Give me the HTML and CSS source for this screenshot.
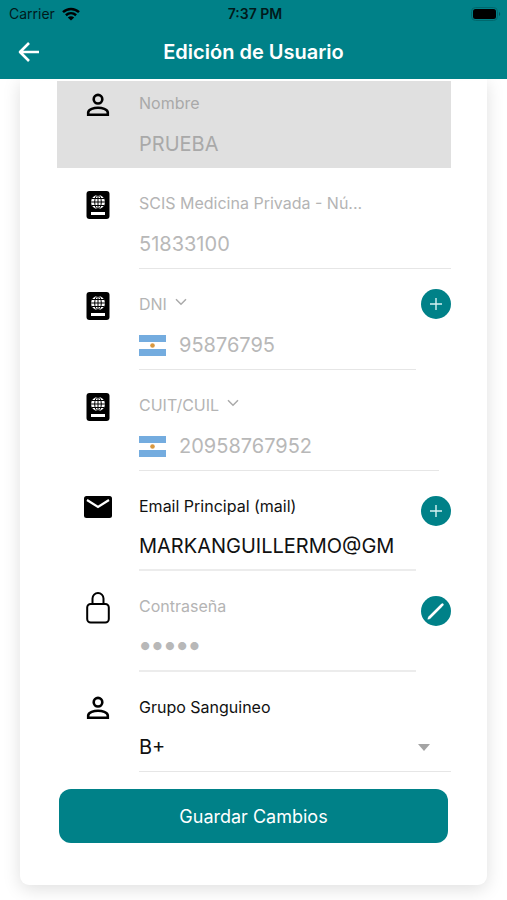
FILE: index.html
```html
<!DOCTYPE html>
<html lang="es">
<head>
<meta charset="utf-8">
<meta name="viewport" content="width=device-width, initial-scale=1">
<title>Edición de Usuario</title>
<link rel="stylesheet" href="styles.css">
</head>
<body>
<svg width="0" height="0" class="sprite" aria-hidden="true">
  <symbol id="person" viewBox="0 0 24 24">
    <circle cx="12" cy="6.2" r="4.3" fill="none" stroke="#000" stroke-width="2.6"/>
    <path d="M2.2 21.8v-2.2c0-3.4 6-4.9 9.8-4.9s9.8 1.500 9.800 4.900v2.200z" fill="none" stroke="#000" stroke-width="2.600"/>
  </symbol>
  <symbol id="passport" viewBox="0 0 24 28">
    <rect x="0.500" y="0" width="23" height="28" rx="3"/>
    <circle cx="12" cy="11" r="7" fill="#fff"/>
    <g fill="none" stroke="#000" stroke-width="1">
      <ellipse cx="12" cy="11" rx="3.300" ry="7"/>
      <path d="M12 4v14M5 11h14M6 7.500h12M6 14.500h12"/>
    </g>
    <path d="M5 21h14v3H5z" fill="#fff"/>
  </symbol>
  <symbol id="flag" viewBox="0 0 27 21">
    <path d="M0 0h27v21H0z" fill="#fff"/>
    <path d="M0 0h27v7H0zM0 14h27v7H0z" fill="#74acdf"/>
    <circle cx="13.500" cy="10.500" r="2.300" fill="#d9983f"/>
  </symbol>
  <symbol id="chevron" viewBox="0 0 12 8">
    <path d="M1 1.200l5 5 5-5" fill="none" stroke="#aaa" stroke-width="1.500"/>
  </symbol>
  <symbol id="plus" viewBox="0 0 30 30">
    <path d="M15 9v12M9 15h12" fill="none" stroke="#d5f2f2" stroke-width="1.400"/>
  </symbol>
</svg>

<header class="topbar">
  <div class="status">
    <div class="carrier">Carrier
      <svg width="18" height="14" viewBox="0 0 18 14" aria-hidden="true">
        <g fill="none" stroke="#000" stroke-width="2.500">
          <path d="M1 5.200c4.600-4.300 11.400-4.300 16 0"/>
          <path d="M3.900 8.300c3-2.700 7.200-2.700 10.200 0"/>
        </g>
        <path d="M9 13.500L5.800 10.400c1.900-1.600 4.500-1.600 6.400 0z"/>
      </svg>
    </div>
    <div class="time">7:37 PM</div>
    <div class="battery">
      <svg width="30" height="14" viewBox="0 0 30 14" aria-hidden="true">
        <rect x="0.500" y="0.500" width="26" height="13" rx="4" fill="none" stroke="#00686d"/>
        <rect x="2" y="2" width="23" height="10" rx="2.500"/>
        <path d="M28 5c1.600.6 1.600 3.400 0 4z" fill="#00565a"/>
      </svg>
    </div>
  </div>
  <nav class="nav">
    <button class="back" type="button" aria-label="Volver">
      <svg width="22" height="20" viewBox="0 0 22 20" aria-hidden="true">
        <path d="M21 10H2M11 1L2 10l9 9" fill="none" stroke="#fff" stroke-width="2.600" stroke-linejoin="round"/>
      </svg>
    </button>
    <h1 class="title">Edición de Usuario</h1>
  </nav>
</header>

<main class="card">
  <form>
    <div class="row row-filled">
      <svg class="icon icon-person" aria-hidden="true"><use href="#person"/></svg>
      <div class="field">
        <label for="nombre">Nombre</label>
        <input id="nombre" type="text" value="PRUEBA" disabled>
      </div>
    </div>

    <div class="row">
      <svg class="icon" aria-hidden="true"><use href="#passport"/></svg>
      <div class="field">
        <label for="scis">SCIS Medicina Privada - Nú...</label>
        <input id="scis" type="text" value="51833100" disabled>
      </div>
    </div>

    <div class="row">
      <svg class="icon" aria-hidden="true"><use href="#passport"/></svg>
      <div class="field">
        <label for="dni">DNI <svg class="chevron" aria-hidden="true"><use href="#chevron"/></svg></label>
        <div class="value">
          <svg class="flag" aria-hidden="true"><use href="#flag"/></svg>
          <input id="dni" type="text" value="95876795" disabled>
        </div>
      </div>
      <button class="round" type="button" aria-label="Agregar documento"><svg aria-hidden="true"><use href="#plus"/></svg></button>
    </div>

    <div class="row row-inset">
      <svg class="icon" aria-hidden="true"><use href="#passport"/></svg>
      <div class="field">
        <label for="cuit">CUIT/CUIL <svg class="chevron" aria-hidden="true"><use href="#chevron"/></svg></label>
        <div class="value">
          <svg class="flag" aria-hidden="true"><use href="#flag"/></svg>
          <input id="cuit" type="text" value="20958767952" disabled>
        </div>
      </div>
    </div>

    <div class="row row-editable">
      <svg class="icon icon-mail" viewBox="0 0 28 22" aria-hidden="true">
        <rect width="28" height="22" rx="2.500"/>
        <path d="M3 4l11 7 11-7" fill="none" stroke="#fff" stroke-width="2.200"/>
      </svg>
      <div class="field field-strong">
        <label for="mail">Email Principal (mail)</label>
        <input id="mail" type="text" value="MARKANGUILLERMO@GM">
      </div>
      <button class="round round-low" type="button" aria-label="Agregar email"><svg aria-hidden="true"><use href="#plus"/></svg></button>
    </div>

    <div class="row">
      <svg class="icon icon-lock" viewBox="0 0 24 32" aria-hidden="true">
        <g fill="none" stroke="#000" stroke-width="2">
          <rect x="1.200" y="12" width="21.600" height="18.500" rx="3.500"/>
          <path d="M6.500 12V6.500a5.500 5.500 0 0 1 11 0V12"/>
        </g>
      </svg>
      <div class="field field-strong">
        <label for="clave">Contraseña</label>
        <input id="clave" type="password" value="12345" disabled>
      </div>
      <button class="round round-low" type="button" aria-label="Editar contraseña">
        <svg viewBox="0 0 30 30" aria-hidden="true">
          <path d="M8 22L20.500 9.500" fill="none" stroke="#fff" stroke-width="2.600"/>
          <path d="M6.500 23.500l.6-2.800 2.200 2.200z" fill="#fff"/>
          <path d="M20.800 9.200l.6-.6" stroke="#fff" stroke-width="2.600" stroke-linecap="round"/>
        </svg>
      </button>
    </div>

    <div class="row row-editable">
      <svg class="icon icon-person" aria-hidden="true"><use href="#person"/></svg>
      <div class="field">
        <label for="grupo">Grupo Sanguineo</label>
        <div class="value">
          <select id="grupo"><option>B+</option></select>
          <svg class="caret" width="12" height="7" viewBox="0 0 12 7" aria-hidden="true"><path d="M0 0h12L6 7z" fill="#a4a4a4"/></svg>
        </div>
      </div>
    </div>

    <button class="save" type="submit">Guardar Cambios</button>
  </form>
</main>
</body>
</html>
```

FILE: styles.css
```css
* {
  box-sizing: border-box;
}

body {
  margin: 0;
  background: #fff;
  color: #111;
  font-family: Inter, "Liberation Sans", sans-serif;
  overflow-x: hidden;
}

button {
  border: 0;
  padding: 0;
  font-family: inherit;
}

.sprite {
  position: absolute;
}

.topbar {
  position: relative;
  background: #008188;
  height: 79px;
}

.status {
  display: grid;
  grid-template-columns: 1fr auto 1fr;
  align-items: center;
  height: 27px;
  padding: 0 6px 0 9px;
  font-size: 14px;
  color: #001a1b;
}

.carrier {
  display: flex;
  align-items: center;
  gap: 7px;
}

.time {
  font-weight: 600;
}

.battery {
  display: flex;
  justify-content: flex-end;
}

.nav {
  display: grid;
  grid-template-columns: 40px 1fr 40px;
  align-items: center;
  height: 50px;
}

.back {
  display: flex;
  justify-content: flex-end;
  background: none;
}

.title {
  margin: 0;
  color: #fff;
  font-size: 20px;
  font-weight: 600;
  text-align: center;
}

.card {
  margin: 0 20px 15px;
  padding: 2px 36px 42px 37px;
  border-radius: 0 0 9px 9px;
  background: #fff;
  box-shadow: 0 4px 18px rgba(0, 0, 0, 0.13);
}

.row {
  display: flex;
  align-items: flex-start;
  height: 101px;
}

.row-editable {
  height: 100px;
}

.row-inset {
  padding-right: 12px;
}

.icon {
  flex: none;
  width: 24px;
  height: 28px;
  margin: 23px 29px 0;
}

.icon-person {
  height: 24px;
  margin-top: 24px;
}

.icon-mail {
  width: 28px;
  height: 22px;
  margin: 25px 27px 0;
}

.icon-lock {
  height: 32px;
  margin-top: 21px;
}

.field {
  flex: 1;
  min-width: 0;
  height: 100%;
  padding-top: 23px;
  border-bottom: 1px solid #e6e6e6;
}

.field-strong {
  border-bottom: 2px solid #ececec;
}

.row-filled {
  height: 87px;
  background: #e0e0e0;
}

.row-filled .field {
  padding-top: 10px;
  border-bottom: 0;
}

.row-filled .icon {
  margin-top: 12px;
}

label {
  display: flex;
  align-items: center;
  gap: 8px;
  height: 24px;
  color: #b4b4b4;
  font-size: 16px;
  white-space: nowrap;
}

.row-editable label {
  color: #111;
}

.chevron {
  width: 12px;
  height: 8px;
  margin-bottom: 5px;
}

.value {
  display: flex;
  align-items: center;
}

.flag {
  flex: none;
  width: 27px;
  height: 21px;
  margin-right: 13px;
}

input,
select {
  display: block;
  width: 100%;
  min-width: 0;
  height: 32px;
  margin: 0;
  padding: 0;
  border: 0;
  outline: 0;
  background: none;
  color: #111;
  font-family: inherit;
  font-size: 20px;
  appearance: none;
  opacity: 1;
}

label + input,
.value {
  margin-top: 13px;
}

.row-editable label + input,
.row-editable .value {
  margin-top: 12px;
}

label + input {
  padding-right: 20px;
}

input:disabled {
  color: #b8b8b8;
}

label + input[type="password"] {
  margin-top: 10px;
  font-size: 26px;
  font-weight: 700;
}

.row-filled label,
.row-filled input:disabled {
  color: #a9a9a9;
}

.caret {
  flex: none;
  margin-right: 21px;
}

.round {
  flex: none;
  width: 30px;
  height: 30px;
  margin: 20px 0 0 5px;
  border-radius: 50%;
  background: #008188;
}

.round-low {
  margin-top: 25px;
}

.round svg {
  display: block;
  width: 30px;
  height: 30px;
}

.save {
  display: block;
  width: calc(100% - 5px);
  height: 54px;
  margin: 17px 0 0 2px;
  border-radius: 12px;
  background: #008188;
  color: #fff;
  font-size: 18px;
}
```
